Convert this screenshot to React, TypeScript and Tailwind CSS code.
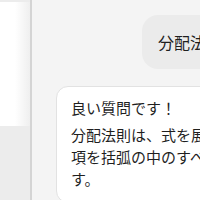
export default function App() {
  return (
    <div
      className="w-[200px] h-[200px] overflow-hidden flex bg-[#f4f4f4] text-[#1f1f1f]"
      style={{ fontFamily: '"Noto Sans CJK JP", "Noto Sans", sans-serif' }}
    >
      {/* Left panel */}
      <div className="w-[30px] shrink-0 flex flex-col bg-[#ececec] pt-[2px]">
        <div className="h-[124px] bg-linear-to-r from-white via-white to-[#efefef]" />
      </div>
      <div className="w-[2px] shrink-0 bg-[#d4d4d4]" />

      {/* Chat */}
      <div className="flex-1 min-w-0 flex flex-col pt-[15px]">
        <div className="ml-[110px] w-[220px] shrink-0 h-[54px] rounded-2xl bg-[#ebebeb] pl-4 flex items-center text-[16px] whitespace-nowrap">
          分配法則について教えてください
        </div>

        <div className="mt-[17px] ml-[24px] w-[320px] shrink-0 bg-white border border-[#e2e2e2] rounded-xl pl-[14px] pt-[10px] pb-3 text-[15px] leading-[22px] whitespace-nowrap">
          <p>良い質問です！</p>
          <p className="mt-[5px]">
            分配法則は、式を展開するときに外側の
            <br />
            項を括弧の中のすべての項に掛ける法則で
            <br />
            す。
          </p>
        </div>
      </div>
    </div>
  )
}
